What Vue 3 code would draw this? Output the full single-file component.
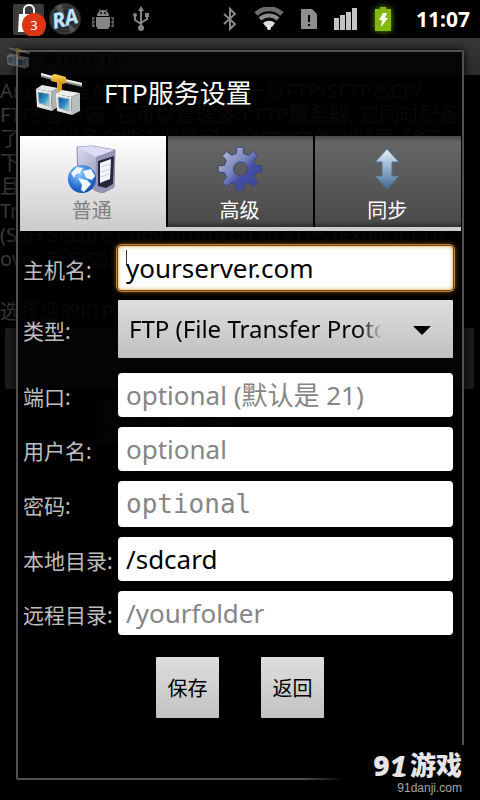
<script setup>
    import { ref } from 'vue';

    const tab = ref('general');
    const type = ref('FTP');
    const host = ref('yourserver.com');

    const about = [
        'AndFTP是Android平台上的一款FTP/SFTP/SCP/',
        'FTPS客户端. 它可以管理多个FTP服务器. 它同时配备',
        '了一个设备文件浏览器和一个FTP文件浏览器. 除了',
        '下载/上传功能之外, 它还支持断点续传功能. 并',
        '且支持文件夹同步. 它支持 SFTP (SSH File',
        'Transfer Protocol), SCP',
        '(SSH Secure Copy Protocol) 和 FTPS (Explicit FTP',
        'over TLS/SSL).'
    ];

    const fields = ref([
        { id: 'port', label: '端口:', value: '', hint: 'optional (默认是 21)', type: 'text' },
        { id: 'user', label: '用户名:', value: '', hint: 'optional', type: 'text' },
        { id: 'pass', label: '密码:', value: '', hint: 'optional', type: 'password' },
        { id: 'local', label: '本地目录:', value: '/sdcard', hint: '', type: 'text' },
        { id: 'remote', label: '远程目录:', value: '', hint: '/yourfolder', type: 'text' }
    ]);

    // outline of the gear: 8 teeth, 4 points each
    function gear(){
        let points = [];
        for(let i = 0; i < 8; i++){
            [[-13, 16], [-8, 22], [8, 22], [13, 16]].forEach(([angle, r]) => {
                let a = (i * 45 + angle) * Math.PI / 180;
                points.push((24 + r * Math.sin(a)).toFixed(1) + ' ' + (24 - r * Math.cos(a)).toFixed(1));
            });
        }
        return 'M' + points.join('L') + 'zM24 17a7 7 0 1 0 1 0z';
    }
</script>

<template>
    <div class="screen">
        <svg class="defs" width="0" height="0" aria-hidden="true">
            <defs>
                <linearGradient id="cube" x1="0" y1="0" x2="1" y2="1">
                    <stop offset="0" stop-color="#fafafa" />
                    <stop offset="1" stop-color="#d4d6d6" />
                </linearGradient>
                <linearGradient id="glass" x1="0" y1="0" x2="1" y2="1">
                    <stop offset="0" stop-color="#0d4c8c" />
                    <stop offset="0.55" stop-color="#2f8fc4" />
                    <stop offset="1" stop-color="#b4ecd8" />
                </linearGradient>
                <linearGradient id="gold" x1="0" y1="0" x2="0" y2="1">
                    <stop offset="0" stop-color="#ffd95c" />
                    <stop offset="1" stop-color="#d48f06" />
                </linearGradient>
                <symbol id="ftp" viewBox="0 0 48 48">
                    <path d="M7 5 18 8 18 12 7 9zM31 11 48 15 48 19 31 15z" fill="#8c8c8c" />
                    <path d="M7 5 18 8 18 10 7 7zM31 11 48 15 48 17 31 13z" fill="#f0f0f0" />
                    <path d="M23 13h5v15h-5z" fill="#dc9c14" />
                    <path d="M18 7 21 6 32 9 32 15 29 16 17 13z" fill="url(#gold)" />
                    <path d="M2 21 17 24 18 43 3 39z" fill="url(#cube)" />
                    <path d="M2 21 8 17 24 20 17 24z" fill="#e4e6e6" />
                    <path d="M17 24 24 20 25 38 18 43z" fill="#aeb2b2" />
                    <path d="M4 24 15 26 15 38 5 35z" fill="url(#glass)" stroke="#9ab" />
                    <path d="M22 26 37 29 38 47 23 43z" fill="url(#cube)" />
                    <path d="M22 26 28 22 46 25 37 29z" fill="#eceeee" />
                    <path d="M37 29 46 25 46 43 38 47z" fill="#b8bcbc" />
                    <path d="M24 29 35 31 35 43 25 40z" fill="url(#glass)" stroke="#9ab" />
                </symbol>
            </defs>
        </svg>

        <header class="status">
            <div class="notes">
                <svg width="34" height="34" viewBox="0 0 34 34">
                    <rect x="1" y="2" width="31" height="31" rx="2" fill="#3b3b3b" />
                    <path d="M12 12V8a5 5 0 0 1 10 0v4" fill="none" stroke="#fff" stroke-width="2" />
                    <path d="M7 12h20v18H6z" fill="#fff" />
                    <circle cx="22" cy="23" r="12" fill="#de3512" />
                    <text x="22" y="28" text-anchor="middle" fill="#fff" font-size="13">3</text>
                </svg>
                <svg width="34" height="34" viewBox="0 0 34 34">
                    <circle cx="17" cy="17" r="16" fill="#2a2a2a" />
                    <g fill="none" stroke="#444">
                        <circle cx="17" cy="17" r="14" />
                        <circle cx="17" cy="17" r="11" />
                    </g>
                    <path d="M17 17 7 5A15 15 0 0 1 14 2zM17 17 28 28A15 15 0 0 1 23 31z" fill="#555" />
                    <text x="17" y="24" text-anchor="middle" fill="#c4e3f7" stroke="#2e6d9c" stroke-width="1" paint-order="stroke" font-size="21" font-weight="bold" font-style="italic" transform="rotate(-14 17 17)">RA</text>
                </svg>
                <svg class="android" width="22" height="22" viewBox="0 0 22 22" fill="#858585">
                    <path d="M5 8a6 6 0 0 1 12 0zM4 9h14v9l-2 3H6l-2-3z" />
                    <path d="M7 1l2 3M15 1l-2 3M0 10h3M0 14h3M0 18h3M19 10h3M19 14h3M19 18h3M1 10v9M21 10v9" stroke="#858585" />
                    <circle cx="9" cy="5" r="1" fill="#000" />
                    <circle cx="13" cy="5" r="1" fill="#000" />
                </svg>
                <svg class="usb" width="18" height="26" viewBox="0 0 18 26" fill="#858585">
                    <path d="M9 3v19M3 9v5l6 4M15 9v4l-6 4" fill="none" stroke="#858585" stroke-width="2" />
                    <path d="M9 0l3 5H6zM13 7h4v4h-4z" />
                    <circle cx="3" cy="9" r="2" />
                    <circle cx="9" cy="22" r="3" />
                </svg>
            </div>
            <div class="signals">
                <svg width="14" height="24" viewBox="0 0 14 24" fill="none" stroke="#8a8a8a" stroke-width="2">
                    <path d="M1 7l11 10-5 5V2l5 5L1 17" />
                </svg>
                <svg width="30" height="24" viewBox="0 0 30 24" fill="none">
                    <path d="M2 7a19 19 0 0 1 26 0" stroke="#6c6c6c" stroke-width="5" />
                    <path d="M6 12a13 13 0 0 1 18 0" stroke="#8c8c8c" stroke-width="4" />
                    <path d="M9 16a9 9 0 0 1 12 0l-3 4h-6z" fill="#ddd" />
                    <circle cx="15" cy="21" r="2" fill="#eee" />
                </svg>
                <svg width="16" height="20" viewBox="0 0 16 20">
                    <path d="M0 0h11l5 5v15H0z" fill="#8e8e8e" />
                    <path d="M7 6h2v7H7zM7 15h2v2H7z" fill="#000" />
                </svg>
                <svg width="24" height="22" viewBox="0 0 24 22" fill="#c4c4c4">
                    <path d="M0 10h5v12H0zM6 7h5v15H6zM12 4h5v18h-5zM18 0h5v22h-5z" />
                </svg>
                <svg class="battery" width="16" height="24" viewBox="0 0 16 24">
                    <path d="M5 0h6v2h5v22H0V2h5z" fill="#82b90c" />
                    <path d="M8 6h4l-2 5h3l-7 9 1-7H4z" fill="#fff" />
                </svg>
                <time>11:07</time>
            </div>
        </header>

        <main>
            <section class="behind" aria-hidden="true">
                <div class="appbar">
                    <svg width="24" height="24"><use href="#ftp" /></svg>
                    <b>AndFTP</b>
                </div>
                <div class="about">
                    <p v-for="line in about" :key="line">{{ line }}</p>
                </div>
                <p class="choose">选择您的FTP服务器:</p>
                <div class="picker"></div>
                <div class="actions"><span>添加</span><span>编辑</span></div>
            </section>

            <form class="dialog" @submit.prevent>
                <h1>
                    <svg width="48" height="48"><use href="#ftp" /></svg>
                    FTP服务设置
                </h1>

                <nav class="tabs">
                    <button type="button" :class="{ active: tab == 'general' }" @click="tab = 'general'">
                        <svg width="48" height="48" viewBox="0 0 48 48">
                            <defs>
                                <linearGradient id="side" x1="0" y1="0" x2="1" y2="1">
                                    <stop offset="0" stop-color="#dcdcf4" />
                                    <stop offset="1" stop-color="#77779c" />
                                </linearGradient>
                                <radialGradient id="sea" cx="0.4" cy="0.3" r="0.8">
                                    <stop offset="0" stop-color="#8fd0ff" />
                                    <stop offset="0.6" stop-color="#2672d4" />
                                    <stop offset="1" stop-color="#123f9c" />
                                </radialGradient>
                            </defs>
                            <path d="M9 2 24 1 47 5 46 42 35 48 28 46 10 34z" fill="url(#side)" stroke="#8888a8" />
                            <path d="M9 2 24 1 47 5 28 12z" fill="#dcdcf4" />
                            <path d="M28 12 47 5 46 43 34 48 27 46z" fill="#9494b4" />
                            <path d="M30 16 46 11 45 39 38 43 30 41z" fill="#26263c" />
                            <path d="M32 18 43 14 42 34 32 38z" fill="#f4f4fc" />
                            <path d="M33 22 42 19M33 27 42 24M33 32 41 29" stroke="#ccd" />
                            <circle cx="14" cy="34" r="14" fill="url(#sea)" />
                            <path d="M3 28 9 22 15 23 12 28 8 29 6 33zM15 26 23 24 27 31 24 35 18 33zM10 33 19 35 23 39 16 47 13 45 14 40z" fill="#f1f7ff" />
                        </svg>
                        普通
                    </button>
                    <button type="button" :class="{ active: tab == 'advanced' }" @click="tab = 'advanced'">
                        <svg width="48" height="48" viewBox="0 0 48 48">
                            <defs>
                                <linearGradient id="gear" x1="0" y1="0" x2="1" y2="1">
                                    <stop offset="0.1" stop-color="#b4bcd4" />
                                    <stop offset="0.45" stop-color="#7480bc" />
                                    <stop offset="0.6" stop-color="#4450a4" />
                                    <stop offset="1" stop-color="#38449c" />
                                </linearGradient>
                            </defs>
                            <path :d="gear()" fill="url(#gear)" fill-rule="evenodd" stroke="#3c4684" stroke-linejoin="round" />
                        </svg>
                        高级
                    </button>
                    <button type="button" :class="{ active: tab == 'sync' }" @click="tab = 'sync'">
                        <svg width="48" height="48" viewBox="0 0 48 48">
                            <defs>
                                <linearGradient id="arrow" x1="0" y1="0" x2="0" y2="1">
                                    <stop offset="0" stop-color="#e6f2fc" />
                                    <stop offset="1" stop-color="#40699a" />
                                </linearGradient>
                            </defs>
                            <path d="M24 4 36 17H29V31H36L24 44 12 31H19V17H12z" fill="url(#arrow)" stroke="#54718e" />
                        </svg>
                        同步
                    </button>
                </nav>

                <div class="fields">
                    <div class="row">
                        <label for="host">主机名:</label>
                        <div class="box focus">
                            <input id="host" type="text" v-model="host">
                            <span class="caret"></span>
                        </div>
                    </div>
                    <div class="row type">
                        <label for="type">类型:</label>
                        <div class="box spinner">
                            <select id="type" v-model="type">
                                <option value="FTP">FTP (File Transfer Protocol)</option>
                            </select>
                            <svg class="arrow" width="18" height="9" viewBox="0 0 18 9"><path d="M0 0h18L9 9z" /></svg>
                        </div>
                    </div>
                    <div class="row" v-for="field in fields" :key="field.id">
                        <label :for="field.id">{{ field.label }}</label>
                        <div class="box">
                            <input :id="field.id" :type="field.type" :placeholder="field.hint" v-model="field.value">
                        </div>
                    </div>
                </div>

                <div class="buttons">
                    <button type="submit">保存</button>
                    <button type="button">返回</button>
                </div>
            </form>
        </main>

        <footer class="mark">
            <div class="logo"><span>9<i>1</i></span>游戏</div>
            <div class="site">91danji.com</div>
        </footer>
    </div>
</template>

<style>
    body{
        background-color: #000;
    }
</style>

<style scoped>
    .screen{
        min-height: 100vh;
        position: relative;
        display: flex;
        flex-direction: column;
        overflow: hidden;
        background-color: #000;
        color: #fff;
        font-family: "Noto Sans", "Noto Sans CJK SC", sans-serif;
    }
    .screen *{
        box-sizing: border-box;
    }
    .defs{
        position: absolute;
    }
    svg{
        display: block;
        flex: none;
    }
    p{
        margin: 0;
    }
    .status{
        height: 38px;
        padding: 0 10px 0 12px;
        display: flex;
        align-items: center;
        justify-content: space-between;
    }
    .notes, .signals{
        display: flex;
        align-items: center;
    }
    .notes{
        gap: 2px;
    }
    .android{
        margin-left: 8px;
    }
    .usb{
        margin-left: 16px;
    }
    .signals{
        gap: 17px;
    }
    .battery{
        filter: drop-shadow(0 0 3px #6a9c00);
    }
    time{
        margin-left: 8px;
        font-size: 21px;
        font-weight: bold;
    }
    main{
        flex: 1;
        display: grid;
        grid-template-columns: minmax(0, 1fr);
    }
    .behind, .dialog{
        grid-area: 1 / 1;
    }
    .behind{
        overflow: hidden;
        color: #3a3a3a;
        font-size: 20px;
        line-height: 24px;
        white-space: nowrap;
    }
    .appbar{
        height: 37px;
        padding-left: 6px;
        display: flex;
        align-items: center;
        gap: 14px;
        background: linear-gradient(#383838, #2c2c2c);
        color: #1a1a1a;
        font-size: 22px;
    }
    .appbar svg{
        opacity: 0.3;
    }
    .about{
        padding-top: 4px;
    }
    .choose{
        padding: 29px 0 4px;
    }
    .picker{
        height: 61px;
        margin: 0 6px 0 5px;
        border-radius: 2px;
        background-color: #1c1c1c;
    }
    .actions{
        padding: 10px 97px;
        display: flex;
        gap: 8px;
    }
    .actions span{
        width: 64px;
        padding: 10px 0;
        text-align: center;
        background-color: #222;
        color: #000;
    }
    .dialog{
        margin: 12px 16px 20px;
        border: 2px solid #505050;
        border-radius: 2px;
        background-color: rgba(0, 0, 0, 0.86);
        box-shadow: 0 0 10px #000;
    }
    h1{
        height: 84px;
        margin: 0;
        padding: 0 16px 4px;
        display: flex;
        align-items: center;
        gap: 22px;
        font-size: 26px;
        font-weight: normal;
    }
    .tabs{
        margin: 0 1px 0 2px;
        display: flex;
        gap: 2px;
        border-bottom: 4px solid #cdcdcd;
    }
    .tabs button{
        flex: 1;
        height: 91px;
        padding: 9px 2px 0 0;
        display: flex;
        flex-direction: column;
        align-items: center;
        gap: 3px;
        border: none;
        background: linear-gradient(#484848, #666 6px, #4b4b4b 85px, #303030);
        color: #fff;
        font-family: inherit;
        font-size: 20px;
        line-height: 30px;
    }
    .tabs .active{
        background: linear-gradient(#fff, #cdcdcd);
        color: #808080;
    }
    .fields{
        padding: 15px 9px 22px 5px;
        display: flex;
        flex-direction: column;
        gap: 10px;
    }
    .row{
        display: flex;
        align-items: center;
    }
    .row label{
        width: 95px;
        padding-top: 4px;
        flex: none;
        color: #bebebe;
        font-size: 21px;
        line-height: 28px;
        white-space: nowrap;
    }
    .box{
        flex: 1;
        min-width: 0;
        position: relative;
    }
    input, select{
        width: 100%;
        height: 44px;
        display: block;
        border: none;
        outline: none;
        color: #000;
        font-family: inherit;
    }
    input{
        padding: 0 8px;
        border-radius: 4px;
        background-color: #fff;
        font-size: 26px;
    }
    input::placeholder{
        color: #858585;
        opacity: 1;
    }
    input[type="password"]{
        height: 46px;
        font-family: "DejaVu Sans Mono", monospace;
    }
    .focus input{
        box-shadow: inset 0 0 4px #e8a040, 0 0 0 1px #6b430c, 0 0 0 2px #c08a3c, 0 0 5px 2px #7c5010;
    }
    .caret{
        width: 1px;
        height: 16px;
        position: absolute;
        top: 4px;
        left: 8px;
        background-color: #333;
    }
    .type{
        margin-bottom: 5px;
    }
    .spinner{
        border-radius: 1px;
        background: linear-gradient(#dedede, #c0c0c0);
    }
    select{
        height: 58px;
        padding: 0 72px 2px 11px;
        appearance: none;
        background: none;
        font-size: 24px;
        mask-image: linear-gradient(270deg, transparent 70px, #000 94px);
    }
    .arrow{
        position: absolute;
        top: 26px;
        right: 22px;
        pointer-events: none;
    }
    .buttons{
        display: flex;
        justify-content: center;
        gap: 42px;
    }
    .buttons button{
        width: 63px;
        height: 61px;
        padding: 0;
        border: none;
        border-radius: 1px;
        background: linear-gradient(#dedede, #c2c2c2);
        color: #000;
        font-family: inherit;
        font-size: 20px;
    }
    /* sits over the bottom right corner of the dialog */
    .mark{
        position: absolute;
        right: 0;
        bottom: 0;
        padding: 4px 18px 4px 70px;
        background: linear-gradient(90deg, transparent, #000 40px);
        text-align: right;
    }
    .logo{
        display: flex;
        align-items: center;
        justify-content: flex-end;
        gap: 4px;
        color: #e6e6e6;
        font-size: 26px;
        font-weight: 900;
        line-height: 32px;
    }
    .logo span{
        position: relative;
        font-size: 28px;
    }
    .logo span::after{
        content: "";
        width: 14px;
        height: 4px;
        position: absolute;
        right: 0;
        bottom: 4px;
        border-radius: 50%;
        background-color: #e6e6e6;
    }
    .site{
        color: #a6a6a6;
        font-family: "Liberation Sans", sans-serif;
        font-size: 12px;
        line-height: 15px;
    }
</style>
